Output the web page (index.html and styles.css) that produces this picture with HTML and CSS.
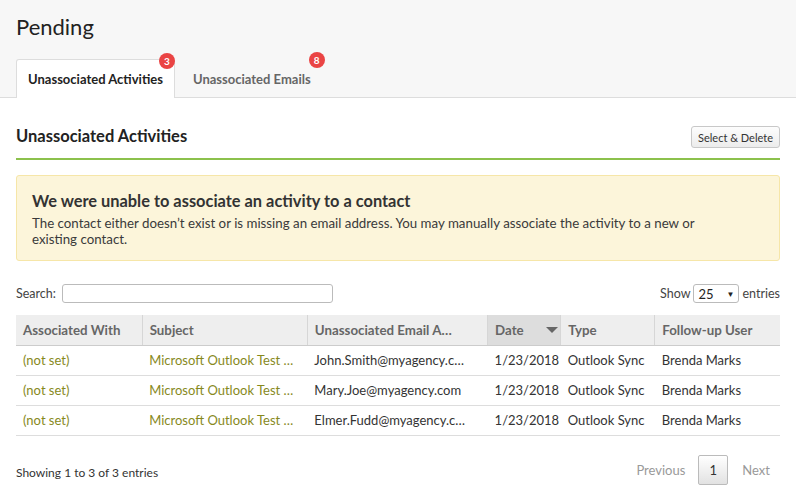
FILE: index.html
```html
<!DOCTYPE html>
<html>
<head>
<meta charset="utf-8">
<link rel="stylesheet" href="styles.css">
</head>
<body>
<div class="top">
  <h1 class="title">Pending</h1>
  <div class="tabs">
    <div class="tab active">Unassociated Activities<span class="badge">3</span></div>
    <div class="tab">Unassociated Emails<span class="badge">8</span></div>
  </div>
</div>
<div class="main">
  <div class="section-head">
    <h2 class="section-title">Unassociated Activities</h2>
    <button class="btn">Select &amp; Delete</button>
  </div>
  <div class="alert">
    <div class="alert-title">We were unable to associate an activity to a contact</div>
    <div class="alert-text">The contact either doesn’t exist or is missing an email address. You may manually associate the activity to a new or existing contact.</div>
  </div>
  <div class="controls">
    <label class="search">Search: <span class="input"></span></label>
    <div class="show">Show <span class="select">25<span class="caret">▼</span></span> entries</div>
  </div>
  <table class="grid">
    <colgroup>
      <col class="c1"><col class="c2"><col class="c3"><col class="c4"><col class="c5"><col class="c6">
    </colgroup>
    <thead>
      <tr>
        <th>Associated With</th>
        <th>Subject</th>
        <th>Unassociated Email A…</th>
        <th class="sorted">Date<span class="sort"></span></th>
        <th>Type</th>
        <th>Follow-up User</th>
      </tr>
    </thead>
    <tbody>
      <tr><td class="link">(not set)</td><td class="link">Microsoft Outlook Test …</td><td>John.Smith@myagency.c…</td><td>1/23/2018</td><td>Outlook Sync</td><td>Brenda Marks</td></tr>
      <tr><td class="link">(not set)</td><td class="link">Microsoft Outlook Test …</td><td>Mary.Joe@myagency.com</td><td>1/23/2018</td><td>Outlook Sync</td><td>Brenda Marks</td></tr>
      <tr><td class="link">(not set)</td><td class="link">Microsoft Outlook Test …</td><td>Elmer.Fudd@myagency.c…</td><td>1/23/2018</td><td>Outlook Sync</td><td>Brenda Marks</td></tr>
    </tbody>
  </table>
  <div class="footer">
    <div class="info">Showing 1 to 3 of 3 entries</div>
    <div class="pager">
      <span class="pg">Previous</span>
      <span class="pg current">1</span>
      <span class="pg">Next</span>
    </div>
  </div>
</div>
</body>
</html>
```
FILE: styles.css
```css
* { box-sizing: border-box; }
body {
  margin: 0;
  font-family: Lato, "Open Sans", sans-serif;
  color: #333;
  background: #fff;
}
.top {
  background: #f7f7f7;
  border-bottom: 1px solid #ddd;
  padding: 14px 16px 0;
  height: 98px;
}
.title {
  margin: 0;
  font-weight: 400;
  font-size: 22px;
  color: #222;
  line-height: 25px;
}
.tabs {
  display: flex;
  margin-top: 20px;
}
.tab {
  position: relative;
  height: 39px;
  padding: 0 13px;
  display: flex;
  align-items: center;
  font-size: 13px;
  font-weight: 700;
  color: #666;
  margin-right: 5px;
}
.tab.active {
  background: #fff;
  color: #222;
  border: 1px solid #ddd;
  border-bottom: none;
  border-radius: 3px 3px 0 0;
  width: 159px;
  justify-content: center;
  padding: 0;
}
.badge {
  position: absolute;
  top: -7px;
  right: -1px;
  width: 16px;
  height: 16px;
  border-radius: 50%;
  background: #ea4444;
  color: #fff;
  font-size: 10px;
  font-weight: 700;
  display: flex;
  align-items: center;
  justify-content: center;
}
.main { padding: 0 16px; }
.section-head {
  display: flex;
  justify-content: space-between;
  align-items: center;
  height: 62px;
  padding-top: 18px;
  border-bottom: 2px solid #8cc14c;
}
.section-title {
  margin: 0 0 3px;
  font-size: 16.5px;
  font-weight: 700;
  color: #222;
}
.btn {
  font-family: inherit;
  font-size: 11px;
  color: #333;
  height: 22px;
  padding: 0 6px;
  border: 1px solid #c8c8c8;
  border-radius: 3px;
  background: linear-gradient(#fdfdfd, #ececec);
}
.alert {
  margin-top: 15px;
  background: #fcf5da;
  border: 1px solid #f6e6a8;
  border-radius: 3px;
  padding: 15px 15px 13px;
  color: #3a3a3a;
}
.alert-title {
  font-size: 16.4px;
  font-weight: 700;
  color: #333;
  line-height: 20px;
}
.alert-text {
  font-size: 13.3px;
  line-height: 16px;
  margin-top: 4px;
  padding-right: 60px;
}
.controls {
  display: flex;
  justify-content: space-between;
  align-items: center;
  margin-top: 23px;
  font-size: 12.5px;
  color: #444;
}
.search { display: flex; align-items: center; gap: 6px; }
.input {
  display: inline-block;
  width: 271px;
  height: 19px;
  border: 1px solid #bbb;
  border-radius: 3px;
  background: #fff;
}
.show { display: flex; align-items: center; gap: 3px; }
.select {
  display: inline-flex;
  justify-content: space-between;
  align-items: center;
  width: 46px;
  height: 19px;
  border: 1px solid #bbb;
  border-radius: 3px;
  padding: 0 4px;
  font-size: 13px;
  color: #222;
}
.caret { font-size: 8px; }
.grid {
  width: 100%;
  border-collapse: collapse;
  table-layout: fixed;
  margin-top: 12px;
  font-size: 13px;
}
.c1 { width: 126px; }
.c2 { width: 165px; }
.c3 { width: 180px; }
.c4 { width: 73px; }
.c5 { width: 94px; }
.c6 { width: 125px; }
th {
  background: #eee;
  height: 30px;
  text-align: left;
  padding: 0 7px;
  font-weight: 700;
  font-size: 13.3px;
  color: #666;
  border-left: 1px solid #d6d6d6;
  border-bottom: 1px solid #ccc;
  white-space: nowrap;
  overflow: hidden;
}
th:first-child { border-left: none; }
th.sorted { background: #ddd; position: relative; }
.sort {
  position: absolute;
  right: 2px;
  top: 12px;
  border-left: 6px solid transparent;
  border-right: 6px solid transparent;
  border-top: 6px solid #666;
}
td {
  height: 30px;
  padding: 0 7px;
  border-bottom: 1px solid #ddd;
  white-space: nowrap;
  overflow: hidden;
  color: #333;
}
td.link { color: #87891d; }
.footer {
  display: flex;
  justify-content: space-between;
  align-items: center;
  margin-top: 19px;
  font-size: 12px;
  color: #333;
}
.info { padding-top: 5px; }
.pager { display: flex; align-items: center; padding-right: 10px; }
.pg {
  color: #999;
  font-size: 13px;
}
.pg.current {
  width: 30px;
  height: 30px;
  display: flex;
  align-items: center;
  justify-content: center;
  border: 1px solid #bbb;
  border-radius: 2px;
  background: linear-gradient(#fff, #e2e2e2);
  color: #333;
  margin: 0 14px 0 13px;
}
```
